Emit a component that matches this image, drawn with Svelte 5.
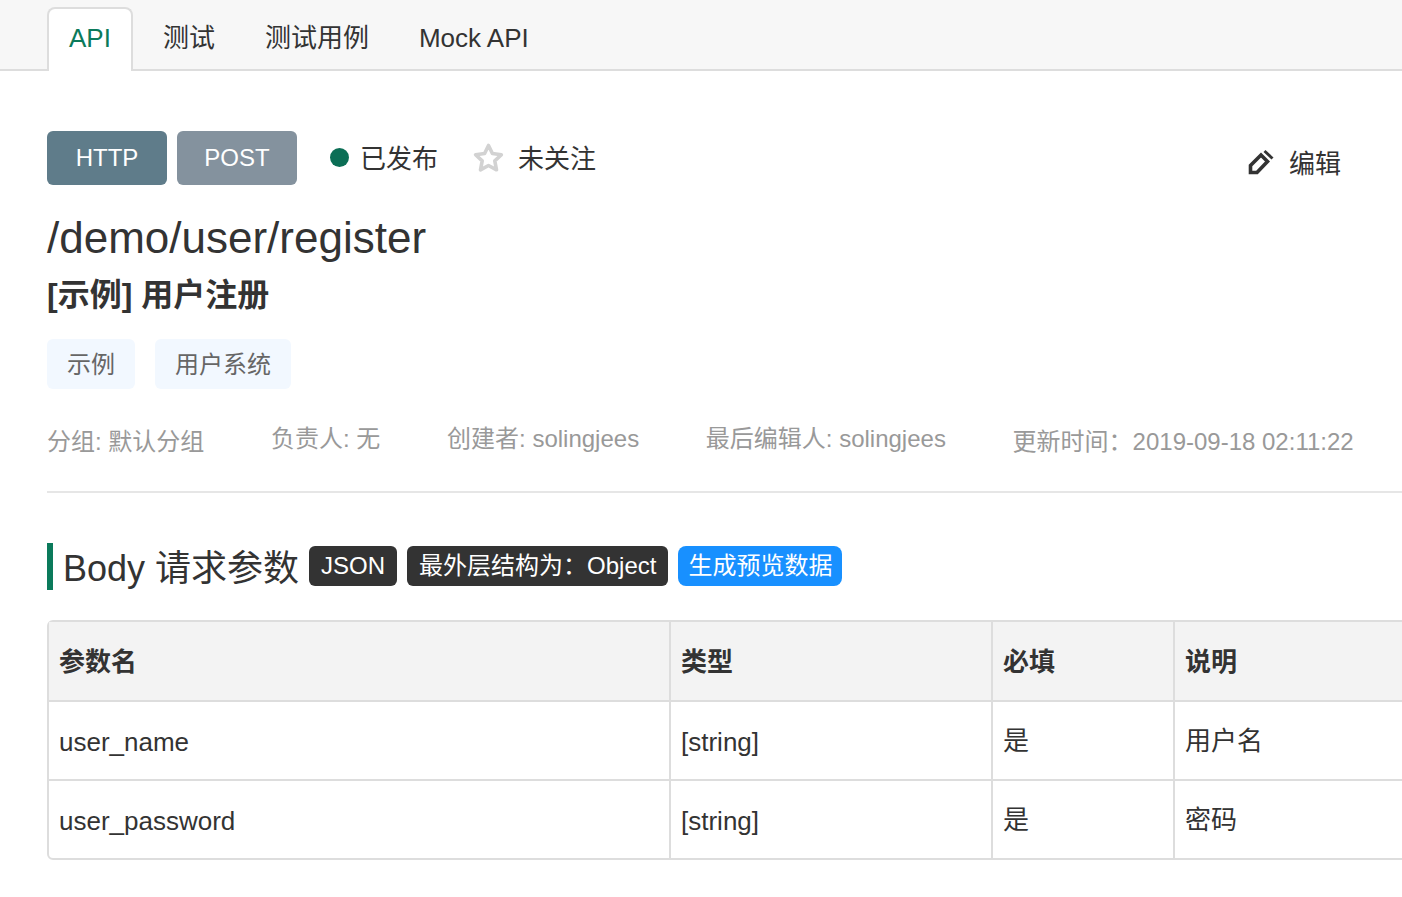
<script>
    const tabs = ["API", "测试", "测试用例", "Mock API"];
    const tags = ["示例", "用户系统"];
    const rows = [
        { name: "user_name", type: "[string]", required: "是", desc: "用户名" },
        { name: "user_password", type: "[string]", required: "是", desc: "密码" }
    ];
</script>

<div class="page">
    <div class="tabBar">
        {#each tabs as tab, i}
            <div class="tab" class:active={i === 0}>{tab}</div>
        {/each}
    </div>

    <div class="content">
        <div class="topRow">
            <span class="method http">HTTP</span>
            <span class="method post">POST</span>
            <span class="status"><i class="dot"></i>已发布</span>
            <span class="follow">
                <svg width="31" height="31" viewBox="0 0 31 31">
                    <path d="M15.5 3.5l3.9 8 9 1.2-6.6 6.2 1.7 8.9-8-4.3-8 4.3 1.7-8.9-6.6-6.2 9-1.2z" fill="none" stroke="#d2d2d2" stroke-width="3.6" stroke-linejoin="round" />
                </svg>
                未关注
            </span>
            <span class="edit">
                <svg width="27" height="26" viewBox="0 0 27 26">
                    <path d="M2.5 23.5v-7L13 6l6.5 6.5L9 23.5z" fill="none" stroke="#333" stroke-width="3.6" />
                    <path d="M17.5 1l8 7.5-2 2.1-8-7.5z" fill="#333" />
                </svg>
                编辑
            </span>
        </div>

        <h1 class="path">/demo/user/register</h1>
        <h2 class="name">[示例] 用户注册</h2>

        <div class="tags">
            {#each tags as tag}
                <span class="tag">{tag}</span>
            {/each}
        </div>

        <div class="meta">
            <span class="low">分组: 默认分组</span>
            <span>负责人: 无</span>
            <span>创建者: solingjees</span>
            <span>最后编辑人: solingjees</span>
            <span class="low">更新时间：2019-09-18 02:11:22</span>
        </div>

        <hr class="rule" />

        <div class="bodyHead">
            <h3 class="bodyTitle">Body 请求参数</h3>
            <span class="badge">JSON</span>
            <span class="badge">最外层结构为：Object</span>
            <span class="badge blue">生成预览数据</span>
        </div>

        <table>
            <thead>
                <tr>
                    <th class="c1">参数名</th>
                    <th class="c2">类型</th>
                    <th class="c3">必填</th>
                    <th class="c4">说明</th>
                </tr>
            </thead>
            <tbody>
                {#each rows as row}
                    <tr>
                        <td class="latin">{row.name}</td>
                        <td class="latin">{row.type}</td>
                        <td class="han">{row.required}</td>
                        <td class="han">{row.desc}</td>
                    </tr>
                {/each}
            </tbody>
        </table>
    </div>
</div>

<style>
    :global(body) {
        background: #fff;
        overflow: hidden;
    }
    .page {
        width: 1402px;
        height: 897px;
        overflow: hidden;
        font-family: "Liberation Sans", "Noto Sans CJK SC", sans-serif;
        color: #333;
        font-size: 26px;
    }
    .tabBar {
        display: flex;
        height: 62px;
        padding: 7px 0 0 47px;
        background: #f7f7f7;
        border-bottom: 2px solid #ddd;
    }
    .tab {
        height: 64px;
        line-height: 62px;
        padding: 0 25px;
        box-sizing: border-box;
    }
    .tab.active {
        color: #0b7a5b;
        background: #fff;
        padding: 0 20px;
        margin-right: 5px;
        line-height: 58px;
        border: 2px solid #ddd;
        border-bottom: none;
        border-radius: 8px 8px 0 0;
    }
    .content {
        padding-left: 47px;
        width: 1500px;
    }
    .topRow {
        display: flex;
        align-items: center;
        margin-top: 60px;
        height: 54px;
        width: 1294px;
    }
    .method {
        width: 120px;
        height: 54px;
        line-height: 54px;
        text-align: center;
        color: #fff;
        font-size: 24px;
        border-radius: 6px;
        margin-right: 10px;
    }
    .http {
        background: #5f7c8a;
    }
    .post {
        background: #84929e;
    }
    .status {
        display: flex;
        align-items: center;
        margin-left: 23px;
        padding-bottom: 4px;
    }
    .dot {
        width: 19px;
        height: 19px;
        border-radius: 50%;
        background: #0b6e55;
        margin: 2px 11px 0 0;
    }
    .follow {
        display: flex;
        align-items: center;
        margin-left: 35px;
        padding-bottom: 4px;
    }
    .follow svg {
        margin: 2px 14px 0 0;
    }
    .edit {
        display: flex;
        align-items: center;
        margin-left: auto;
        margin-top: 7px;
    }
    .edit svg {
        margin: 1px 14px 0 -1px;
    }
    .path {
        margin: 25px 0 0;
        font-size: 44px;
        font-weight: 400;
        line-height: 56px;
    }
    .name {
        margin: 7px 0 0;
        font-size: 32px;
        font-weight: 700;
        line-height: 44px;
    }
    .tags {
        display: flex;
        gap: 20px;
        margin-top: 22px;
    }
    .tag {
        padding: 0 20px;
        height: 50px;
        line-height: 52px;
        font-size: 24px;
        color: #666;
        background: #f2f8ff;
        border-radius: 6px;
    }
    .meta {
        display: flex;
        gap: 66.7px;
        margin-top: 32px;
        font-size: 24px;
        line-height: 36px;
        color: #999;
    }
    .low {
        padding-top: 3px;
    }
    .rule {
        margin: 31px 0 0;
        border: none;
        border-top: 2px solid #e6e6e6;
    }
    .bodyHead {
        display: flex;
        align-items: flex-start;
        margin-top: 50px;
    }
    .bodyTitle {
        margin: 0 10px 0 0;
        padding: 4px 0 0 10px;
        font-size: 36px;
        font-weight: 400;
        line-height: 43px;
        border-left: 6px solid #0b7a5b;
    }
    .badge {
        margin-top: 3px;
        margin-right: 10px;
        padding: 0 12px;
        height: 40px;
        line-height: 40px;
        font-size: 24px;
        color: #fff;
        background: #333;
        border-radius: 6px;
    }
    .blue {
        padding: 0 10px;
        background: #1890ff;
        border-radius: 8px;
    }
    table {
        margin-top: 30px;
        width: 1450px;
        table-layout: fixed;
        border-collapse: separate;
        border-spacing: 0;
        border: 2px solid #ddd;
        border-radius: 6px;
    }
    th,
    td {
        padding: 0 10px;
        text-align: left;
        font-size: 26px;
        border-right: 2px solid #ddd;
        border-bottom: 2px solid #ddd;
    }
    td {
        box-sizing: content-box;
    }
    tr:last-child td {
        border-bottom: none;
    }
    th {
        height: 80px;
        padding-bottom: 4px;
        box-sizing: border-box;
        background: #f3f3f3;
        font-weight: 700;
    }
    .latin {
        padding-top: 4px;
        height: 73px;
    }
    .han {
        padding-bottom: 4px;
        height: 73px;
    }
    .c1 {
        width: 622px;
    }
    .c2 {
        width: 322px;
    }
    .c3 {
        width: 182px;
    }
</style>
